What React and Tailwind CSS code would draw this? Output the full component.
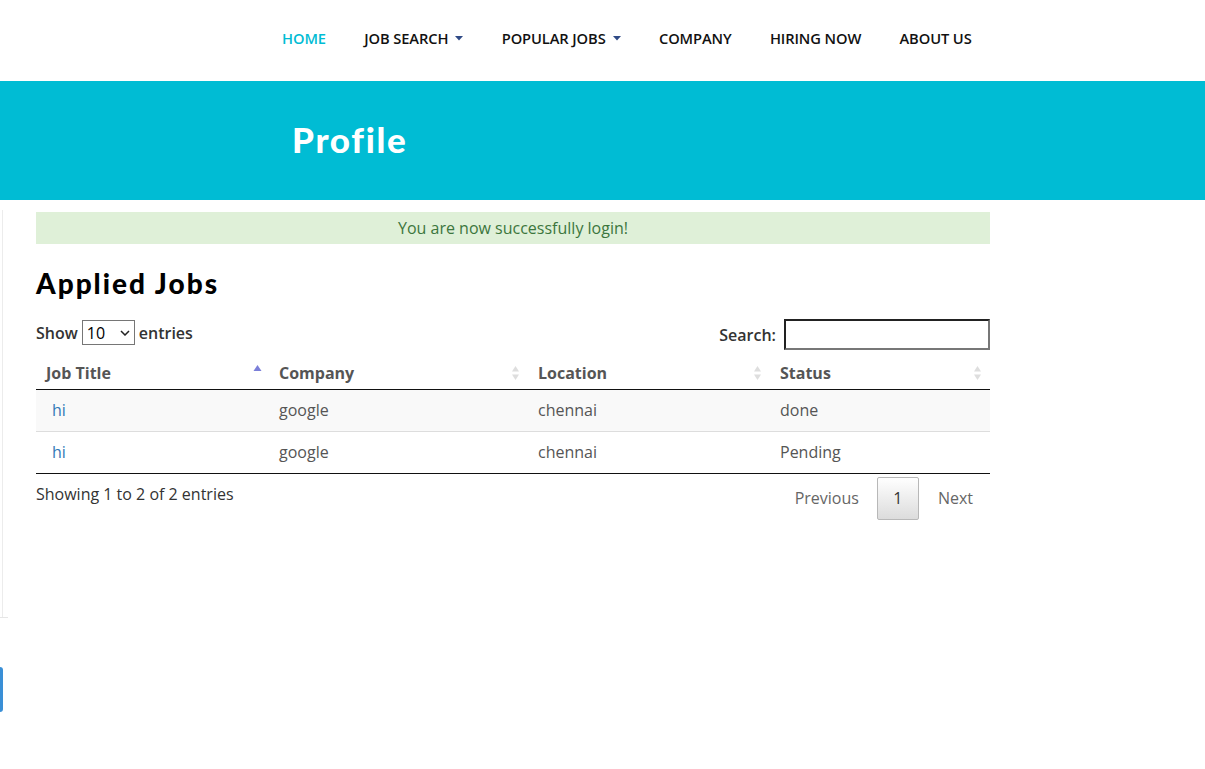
import React from "react";

const navItems = [
  { label: "HOME", active: true },
  { label: "JOB SEARCH", caret: true },
  { label: "POPULAR JOBS", caret: true },
  { label: "COMPANY" },
  { label: "HIRING NOW" },
  { label: "ABOUT US" },
];

const jobs = [
  { title: "hi", company: "google", location: "chennai", status: "done" },
  { title: "hi", company: "google", location: "chennai", status: "Pending" },
];

function SortIcon({ active }) {
  if (active) {
    return (
      <svg width="9" height="12" viewBox="0 0 9 12" className="absolute right-[7px] top-[4px]">
        <path d="M4.5 1 L8.5 7 L0.5 7 Z" fill="#7b7fd9" />
      </svg>
    );
  }
  return (
    <svg width="9" height="18" viewBox="0 0 9 18" className="absolute right-[8px] top-[4px]">
      <path d="M4.5 2 L8 7.5 L1 7.5 Z" fill="#dedede" />
      <path d="M4.5 16 L8 10.5 L1 10.5 Z" fill="#dedede" />
    </svg>
  );
}

function Caret() {
  return (
    <svg width="8" height="5" viewBox="0 0 8 5" className="ml-[7px] mt-[1px]">
      <path d="M0 0 L8 0 L4 4.5 Z" fill="#2f4a86" />
    </svg>
  );
}

export default function App() {
  return (
    <div className="relative min-h-[769px] bg-white font-['Open_Sans',sans-serif] text-[#333]">
      {/* nav */}
      <nav className="h-[81px] flex items-start pt-[28px] pl-[282px]">
        <ul className="flex items-center gap-[38.3px] text-[14.7px] font-semibold tracking-[-0.1px]">
          {navItems.map((item) => (
            <li
              key={item.label}
              className={`flex items-center leading-[20px] ${item.active ? "text-[#00bcd4]" : "text-[#111]"}`}
            >
              {item.label}
              {item.caret && <Caret />}
            </li>
          ))}
        </ul>
      </nav>

      {/* banner */}
      <div className="h-[119px] bg-[#00bcd4] flex items-center pl-[292px] pb-[2px]">
        <h1 className="text-white text-[35px] font-black tracking-[1.7px] font-['Lato',sans-serif] leading-none">
          Profile
        </h1>
      </div>

      {/* side remnants */}
      <div className="absolute left-[2px] top-[210px] h-[407px] w-px bg-[#ececec]" />
      <div className="absolute left-0 top-[617px] h-px w-[8px] bg-[#e6e6e6]" />
      <div className="absolute left-[-4px] top-[667px] h-[45px] w-[7px] rounded-[3px] bg-[#3a8fd6]" />

      <div className="w-[954px] ml-[36px] pt-[12px]">
        <div className="h-[32px] bg-[#dff0d8] text-[#3c763d] text-[16px] flex items-center justify-center">
          You are now successfully login!
        </div>

        <h2 className="mt-[22px] text-[28px] font-black text-black font-['Lato',sans-serif] tracking-[2px] leading-[34px]">
          Applied Jobs
        </h2>

        <div className="mt-[20px] flex items-start justify-between">
          <label className="flex items-center text-[16px] font-semibold text-[#333]">
            Show
            <span className="mx-[4px] w-[53px] h-[25px] border border-[#767676] flex items-center justify-between px-[4px] font-normal text-black">
              10
              <svg width="10" height="6" viewBox="0 0 10 6">
                <path d="M1 1 L5 5 L9 1" stroke="#222" strokeWidth="1.5" fill="none" />
              </svg>
            </span>
            entries
          </label>
          <label className="flex items-center text-[16px] font-semibold text-[#333] -mt-[1px]">
            Search:
            <span className="ml-[8px] w-[206px] h-[31px] border-2 border-t-[#222] border-l-[#222] border-b-[#777] border-r-[#777]" />
          </label>
        </div>

        <table className="mt-[10px] w-full border-collapse text-[16px]">
          <thead>
            <tr className="border-b border-[#111] text-[#555] font-bold">
              <th className="relative w-[233px] h-[29px] text-left pl-[10px] pb-[2px] font-bold">
                Job Title
                <SortIcon active />
              </th>
              <th className="relative w-[259px] text-left pl-[10px] pb-[2px] font-bold">
                Company
                <SortIcon />
              </th>
              <th className="relative w-[242px] text-left pl-[10px] pb-[2px] font-bold">
                Location
                <SortIcon />
              </th>
              <th className="relative text-left pl-[10px] pb-[2px] font-bold">
                Status
                <SortIcon />
              </th>
            </tr>
          </thead>
          <tbody className="text-[#555]">
            {jobs.map((job, i) => (
              <tr
                key={i}
                className={
                  i === 0
                    ? "bg-[#f9f9f9] border-b border-[#ddd]"
                    : "border-b border-[#111]"
                }
              >
                <td className="h-[42px] pl-[16px] text-[#337ab7]">{job.title}</td>
                <td className="pl-[10px]">{job.company}</td>
                <td className="pl-[10px]">{job.location}</td>
                <td className="pl-[10px]">{job.status}</td>
              </tr>
            ))}
          </tbody>
        </table>

        <div className="flex items-start justify-between">
          <div className="mt-[8px] text-[16px] text-[#333]">Showing 1 to 2 of 2 entries</div>
          <div className="mt-[3px] flex items-center text-[16px] text-[#666]">
            <span className="px-[18px]">Previous</span>
            <span className="w-[42px] h-[43px] flex items-center justify-center border border-[#b8b8b8] bg-gradient-to-b from-white to-[#dcdcdc] text-[#333] rounded-[2px]">
              1
            </span>
            <span className="pl-[19px] pr-[17px]">Next</span>
          </div>
        </div>
      </div>
    </div>
  );
}
